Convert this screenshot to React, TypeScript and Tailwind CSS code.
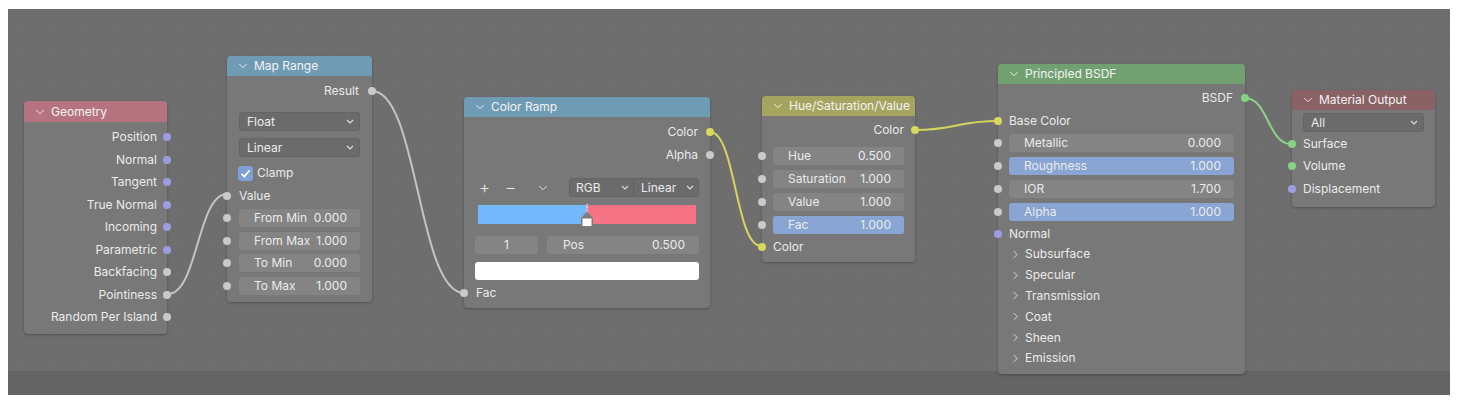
import { ChevronDown, ChevronRight } from 'lucide-react';

type Side = 'left' | 'right';

const GRAY = 'bg-[#c9c9c9]';
const PURPLE = 'bg-[#9d9de2]';
const YELLOW = 'bg-[#d9d85f]';
const GREEN = 'bg-[#86d286]';

function Socket({ side, color }: { side: Side; color: string }) {
  return (
    <span
      className={`absolute top-1/2 -translate-y-1/2 w-[8px] h-[8px] rounded-full ${color} ${
        side === 'left' ? 'left-[-4px]' : 'right-[-4px]'
      }`}
    />
  );
}

function Node({
  className,
  header,
  title,
  children,
}: {
  className: string;
  header: string;
  title: string;
  children: React.ReactNode;
}) {
  return (
    <div
      className={`absolute rounded-[4px] bg-[#787878] shadow-[0_1px_3px_rgba(0,0,0,0.28)] ${className}`}
    >
      <div className={`flex items-center h-[20px] rounded-t-[4px] pl-[9px] gap-[4px] text-[#f3f3f3] ${header}`}>
        <ChevronDown size={14} strokeWidth={1.5} />
        <span>{title}</span>
      </div>
      {children}
    </div>
  );
}

function OutRow({ label, color, h, pr = 'pr-[12px]' }: { label: string; color: string; h: string; pr?: string }) {
  return (
    <div className={`relative flex items-center justify-end ${h} ${pr}`}>
      <span>{label}</span>
      <Socket side="right" color={color} />
    </div>
  );
}

function InRow({ label, color, h, pl = 'pl-[11px]' }: { label: string; color: string; h: string; pl?: string }) {
  return (
    <div className={`relative flex items-center ${h} ${pl}`}>
      <span>{label}</span>
      <Socket side="left" color={color} />
    </div>
  );
}

function Field({
  label,
  value,
  h,
  px,
  blue = false,
}: {
  label: string;
  value: string;
  h: string;
  px: string;
  blue?: boolean;
}) {
  return (
    <div className={`relative flex items-center ${h} ${px}`}>
      <div
        className={`flex flex-1 items-center justify-between h-[18px] rounded-[3px] pl-[15px] pr-[13px] ${
          blue ? 'bg-[#88a5d3]' : 'bg-[#848484]'
        }`}
      >
        <span>{label}</span>
        <span>{value}</span>
      </div>
      <Socket side="left" color={GRAY} />
    </div>
  );
}

function SmallChevron() {
  return (
    <svg width="8" height="5" viewBox="0 0 8 5" className="shrink-0">
      <polyline points="1,1 4,4 7,1" fill="none" stroke="#dcdcdc" strokeWidth="1.2" />
    </svg>
  );
}

function Dropdown({ label, className }: { label: string; className: string }) {
  return (
    <div
      className={`flex items-center justify-between h-[19px] rounded-[3px] bg-[#6b6b6b] border border-[#646464] pl-[7px] pr-[5px] ${className}`}
    >
      <span>{label}</span>
      <SmallChevron />
    </div>
  );
}

function wire(x1: number, y1: number, x2: number, y2: number) {
  const h = Math.max(Math.abs(x2 - x1) * 0.5, 20);
  return `M${x1},${y1} C${x1 + h},${y1} ${x2 - h},${y2} ${x2},${y2}`;
}

export default function App() {
  return (
    <div className="w-[1457px] h-[401px] bg-white pt-[9px] pl-[8px] overflow-hidden font-['Inter',_'DejaVu_Sans',_sans-serif] text-[12px] text-[#ebebeb]">
      <div className="relative flex flex-col w-[1442px] h-[386px] bg-[#6e6e6e]">
        <div className="flex-1 bg-[radial-gradient(circle,_#747474_1px,_transparent_1.2px)] bg-[length:31px_31px]" />
        <div className="h-[24px] bg-[#646464]" />

        <svg className="absolute inset-0 pointer-events-none" width="1442" height="386">
          <path d={wire(160, 285, 219, 185)} fill="none" stroke="#c4c4c4" strokeWidth="2" />
          <path d={wire(364, 82, 456, 284)} fill="none" stroke="#c4c4c4" strokeWidth="2" />
          <path d={wire(702, 123, 753, 237)} fill="none" stroke="#d6d55e" strokeWidth="2" />
          <path d={wire(907, 121, 990, 112)} fill="none" stroke="#d6d55e" strokeWidth="2" />
          <path d={wire(1237, 89, 1283, 135)} fill="none" stroke="#8dd38d" strokeWidth="2" />
        </svg>

        {/* Geometry */}
        <Node className="left-[16px] top-[92px] w-[143px]" header="bg-[#b4737e] h-[21px]" title="Geometry">
          <div className="pt-[4px] pb-[5px]">
            <OutRow label="Position" color={PURPLE} h="h-[22.5px]" pr="pr-[10px]" />
            <OutRow label="Normal" color={PURPLE} h="h-[22.5px]" pr="pr-[10px]" />
            <OutRow label="Tangent" color={PURPLE} h="h-[22.5px]" pr="pr-[10px]" />
            <OutRow label="True Normal" color={PURPLE} h="h-[22.5px]" pr="pr-[10px]" />
            <OutRow label="Incoming" color={PURPLE} h="h-[22.5px]" pr="pr-[10px]" />
            <OutRow label="Parametric" color={PURPLE} h="h-[22.5px]" pr="pr-[10px]" />
            <OutRow label="Backfacing" color={GRAY} h="h-[22.5px]" pr="pr-[10px]" />
            <OutRow label="Pointiness" color={GRAY} h="h-[22.5px]" pr="pr-[10px]" />
            <OutRow label="Random Per Island" color={GRAY} h="h-[22.5px]" pr="pr-[10px]" />
          </div>
        </Node>

        {/* Map Range */}
        <Node className="left-[219px] top-[47px] w-[145px]" header="bg-[#6f9bb4]" title="Map Range">
          <div className="pt-[4px] pb-[5px] flex flex-col">
            <OutRow label="Result" color={GRAY} h="h-[22px]" pr="pr-[13px]" />
            <Dropdown label="Float" className="mt-[10px] mx-[12px]" />
            <Dropdown label="Linear" className="mt-[7px] mx-[12px]" />
            <div className="flex items-center gap-[4px] h-[22px] mt-[5px] pl-[11px]">
              <span className="flex items-center justify-center w-[15px] h-[15px] rounded-[3px] bg-[#7fa0d6]">
                <svg width="11" height="11" viewBox="0 0 11 11">
                  <polyline points="1.5,5.8 4.3,8.6 9.6,2.2" fill="none" stroke="#ffffff" strokeWidth="1.8" />
                </svg>
              </span>
              <span>Clamp</span>
            </div>
            <InRow label="Value" color={GRAY} h="h-[23px]" pl="pl-[12px]" />
            <Field label="From Min" value="0.000" h="h-[22.5px]" px="px-[12px]" />
            <Field label="From Max" value="1.000" h="h-[22.5px]" px="px-[12px]" />
            <Field label="To Min" value="0.000" h="h-[22.5px]" px="px-[12px]" />
            <Field label="To Max" value="1.000" h="h-[22.5px]" px="px-[12px]" />
          </div>
        </Node>

        {/* Color Ramp */}
        <Node className="left-[456px] top-[88px] w-[246px]" header="bg-[#6f9bb4]" title="Color Ramp">
          <div className="pt-[4px] pb-[4px] flex flex-col">
            <OutRow label="Color" color={YELLOW} h="h-[22.5px]" />
            <OutRow label="Alpha" color={GRAY} h="h-[22.5px]" />
            <div className="flex items-center h-[19px] mt-[12px] pl-[14px] pr-[11px]">
              <span className="w-[13px] text-center text-[17px] font-light leading-none">+</span>
              <span className="ml-[13px] w-[13px] text-center text-[17px] font-light leading-none">−</span>
              <span className="ml-[19px]">
                <ChevronDown size={14} strokeWidth={1.5} />
              </span>
              <div className="ml-auto flex h-[19px] w-[130px] rounded-[3px] bg-[#6b6b6b] border border-[#646464]">
                <div className="flex items-center justify-between w-[64px] pl-[6px] pr-[4px] border-r border-[#5f5f5f]">
                  <span>RGB</span>
                  <SmallChevron />
                </div>
                <div className="flex flex-1 items-center justify-between pl-[7px] pr-[4px]">
                  <span>Linear</span>
                  <SmallChevron />
                </div>
              </div>
            </div>
            <div className="relative flex h-[19px] mt-[8px] mx-[14px]">
              <div className="flex-1 bg-[#73b8fb]" />
              <div className="flex-1 bg-[#f67486]" />
              <svg
                className="absolute left-1/2 top-[-1px] -translate-x-1/2"
                width="14"
                height="24"
                viewBox="0 0 14 24"
              >
                <line x1="7" y1="0" x2="7" y2="9" stroke="#f4f4f4" strokeWidth="1.2" strokeDasharray="1.5 1" />
                <polygon points="7,7.5 13,14 13,23 1,23 1,14" fill="#7d7d7d" />
                <rect x="2.5" y="14.5" width="9" height="7.5" fill="#ffffff" />
              </svg>
            </div>
            <div className="flex gap-[9px] h-[18px] mt-[12px] mx-[11px]">
              <div className="flex items-center justify-center w-[63px] rounded-[3px] bg-[#848484]">1</div>
              <div className="flex flex-1 items-center justify-between rounded-[3px] bg-[#848484] pl-[16px] pr-[14px]">
                <span>Pos</span>
                <span>0.500</span>
              </div>
            </div>
            <div className="h-[18px] mt-[8px] mx-[11px] rounded-[3px] bg-white" />
            <InRow label="Fac" color={GRAY} h="h-[22px] mt-[2px]" pl="pl-[12px]" />
          </div>
        </Node>

        {/* Hue/Saturation/Value */}
        <Node className="left-[754px] top-[87px] w-[153px]" header="bg-[#a5a55f]" title="Hue/Saturation/Value">
          <div className="pt-[3px] pb-[5px] flex flex-col">
            <OutRow label="Color" color={YELLOW} h="h-[22px]" pr="pr-[11px]" />
            <div className="mt-[3px]">
              <Field label="Hue" value="0.500" h="h-[23px]" px="px-[11px]" />
              <Field label="Saturation" value="1.000" h="h-[23px]" px="px-[11px]" />
              <Field label="Value" value="1.000" h="h-[23px]" px="px-[11px]" />
              <Field label="Fac" value="1.000" h="h-[23px]" px="px-[11px]" blue />
            </div>
            <InRow label="Color" color={YELLOW} h="h-[21px]" />
          </div>
        </Node>

        {/* Principled BSDF */}
        <Node className="left-[990px] top-[55px] w-[247px]" header="bg-[#71a171]" title="Principled BSDF">
          <div className="pt-[3px] pb-[5px] flex flex-col">
            <OutRow label="BSDF" color={GREEN} h="h-[22px]" />
            <InRow label="Base Color" color={YELLOW} h="h-[23px]" />
            <Field label="Metallic" value="0.000" h="h-[22.75px]" px="px-[11px]" />
            <Field label="Roughness" value="1.000" h="h-[22.75px]" px="px-[11px]" blue />
            <Field label="IOR" value="1.700" h="h-[22.75px]" px="px-[11px]" />
            <Field label="Alpha" value="1.000" h="h-[22.75px]" px="px-[11px]" blue />
            <InRow label="Normal" color={PURPLE} h="h-[21px]" />
            {['Subsurface', 'Specular', 'Transmission', 'Coat', 'Sheen', 'Emission'].map((p) => (
              <div key={p} className="flex items-center h-[20.8px] pl-[11px] gap-[3px]">
                <ChevronRight size={13} strokeWidth={1.5} />
                <span>{p}</span>
              </div>
            ))}
          </div>
        </Node>

        {/* Material Output */}
        <Node className="left-[1284px] top-[81px] w-[143px]" header="bg-[#8a6164]" title="Material Output">
          <div className="pb-[7px] flex flex-col">
            <Dropdown label="All" className="mt-[3px] mx-[11px]" />
            <InRow label="Surface" color={GREEN} h="h-[23px]" />
            <InRow label="Volume" color={GREEN} h="h-[22.5px]" />
            <InRow label="Displacement" color={PURPLE} h="h-[22.5px]" />
          </div>
        </Node>
      </div>
    </div>
  );
}
